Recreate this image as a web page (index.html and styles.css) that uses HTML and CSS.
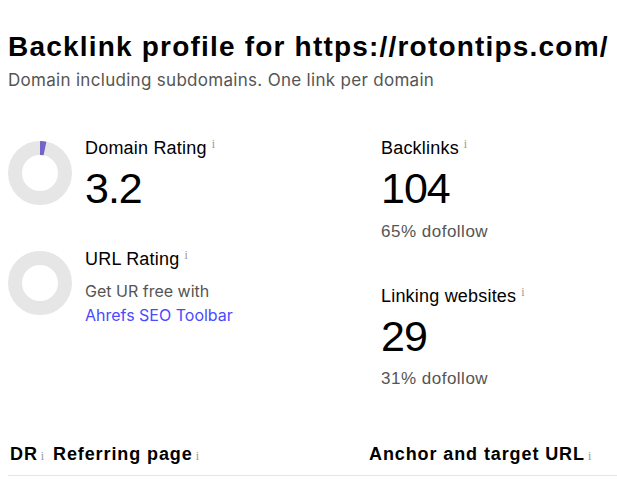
FILE: index.html
```html
<!DOCTYPE html>
<html>
<head>
<meta charset="utf-8">
<link rel="stylesheet" href="styles.css">
</head>
<body>
<div class="page">
  <h1 class="title">Backlink profile for https://rotontips.com/</h1>
  <p class="subtitle">Domain including subdomains. One link per domain</p>

  <div class="metrics">
    <div class="col">
      <div class="rating">
        <svg class="donut" viewBox="0 0 64 64" width="64" height="64">
          <circle cx="32" cy="32" r="25" fill="none" stroke="#e6e6e6" stroke-width="14"/>
          <path d="M32 0 L32 14 A18 18 0 0 1 35.6 14.36 L38.4 0.65 A32 32 0 0 0 32 0 Z" fill="#7663c6"/>
        </svg>
        <div class="rinfo">
          <div class="label">Domain Rating<span class="info">i</span></div>
          <div class="value">3.2</div>
        </div>
      </div>
      <div class="rating ur">
        <svg class="donut" viewBox="0 0 64 64" width="64" height="64">
          <circle cx="32" cy="32" r="25" fill="none" stroke="#e6e6e6" stroke-width="14"/>
        </svg>
        <div class="rinfo">
          <div class="label">URL Rating<span class="info">i</span></div>
          <div class="hint">Get UR free with<br><a class="link" href="#">Ahrefs SEO Toolbar</a></div>
        </div>
      </div>
    </div>
    <div class="col right">
      <div class="metric">
        <div class="label">Backlinks<span class="info">i</span></div>
        <div class="value">104</div>
        <div class="sub">65% dofollow</div>
      </div>
      <div class="metric second">
        <div class="label">Linking websites<span class="info">i</span></div>
        <div class="value">29</div>
        <div class="sub">31% dofollow</div>
      </div>
    </div>
  </div>

  <div class="thead">
    <div class="th dr">DR<span class="info">i</span></div>
    <div class="th ref">Referring page<span class="info">i</span></div>
    <div class="th anchor">Anchor and target URL<span class="info">i</span></div>
  </div>
</div>
</body>
</html>
```

FILE: styles.css
```css
* { box-sizing: border-box; }
html, body { margin: 0; padding: 0; background: #fff; }
body { font-family: "Inter", "Liberation Sans", sans-serif; color: #000; overflow: hidden; }
.page { padding: 0 0 0 8px; }

.title {
  margin: 0;
  padding-top: 30px;
  font-family: "Liberation Sans", Arial, sans-serif;
  font-weight: 700;
  font-size: 28px;
  line-height: 34px;
  letter-spacing: 1.2px;
  color: #000;
}
.subtitle {
  margin: 4px 0 0;
  font-size: 17px;
  line-height: 24px;
  letter-spacing: 0.3px;
  color: #555;
}

.metrics {
  display: grid;
  grid-template-columns: 373px 1fr;
  margin-top: 45px;
}
.rating { display: flex; gap: 13px; align-items: flex-start; }
.rating.ur { margin-top: 36px; }
.donut { flex: none; margin-top: 4px; }
.rating.ur .donut { margin-top: 3px; }

.label {
  font-family: "Liberation Sans", Arial, sans-serif;
  font-size: 18px;
  line-height: 22px;
  letter-spacing: 0.2px;
  color: #000;
}
.info {
  font-family: "Liberation Serif", serif;
  font-size: 12px;
  color: #999;
  vertical-align: top;
  margin-left: 5px;
  position: relative;
  top: -4px;
  letter-spacing: 0;
  font-weight: 400;
}
.value {
  font-family: "Liberation Sans", Arial, sans-serif;
  font-size: 43px;
  line-height: 48px;
  letter-spacing: -1px;
  margin-top: 5px;
  color: #000;
}
.hint {
  margin-top: 9px;
  font-size: 16px;
  line-height: 24px;
  color: #555;
}
.link { color: #4a4aff; text-decoration: none; }
.sub {
  margin-top: 9px;
  font-family: "Liberation Sans", Arial, sans-serif;
  font-size: 17px;
  line-height: 22px;
  letter-spacing: 0.5px;
  color: #555;
}
.metric.second { margin-top: 42px; }
.metric.second .sub { margin-top: 8px; }

.thead {
  display: flex;
  margin-top: 52px;
  border-bottom: 1px solid #e6e6e6;
  padding-bottom: 9px;
}
.th {
  font-family: "Liberation Sans", Arial, sans-serif;
  font-weight: 700;
  font-size: 18px;
  line-height: 24px;
  letter-spacing: 0.9px;
}
.th .info { margin-left: 3px; top: 2px; }
.th.dr { padding-left: 2px; width: 45px; }
.th.ref { width: 316px; }
```
